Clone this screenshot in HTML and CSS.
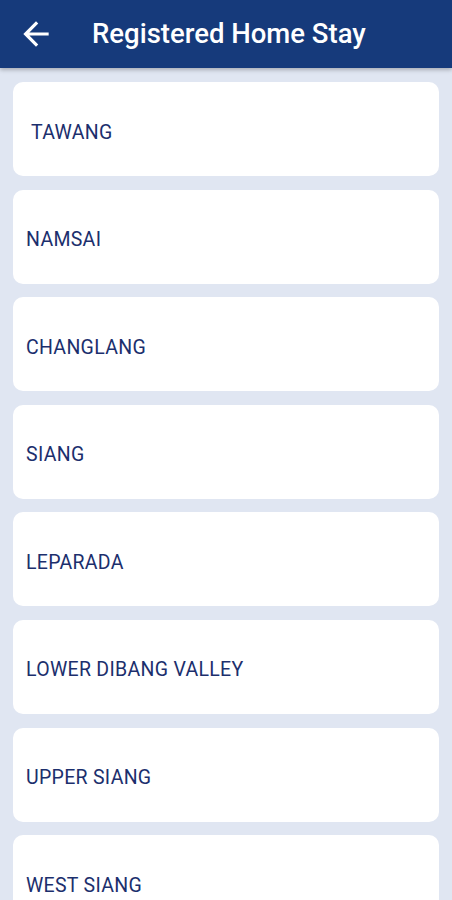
FILE: index.html
```html
<!DOCTYPE html>
<html>
<head>
    <meta charset="utf-8">
    <title>Registered Home Stay</title>
    <link rel="stylesheet" href="styles.css">
</head>
<body>
<div class="topbar">
    <svg class="back" width="38" height="38" viewBox="0 0 24 24">
        <path d="M20 11H7.83l5.59-5.59L12 4l-8 8 8 8 1.41-1.41L7.83 13H20v-2z" fill="#fff"/>
    </svg>
    <span class="title">Registered Home Stay</span>
</div>
<ul class="list">
    <li class="card"><span class="pad"></span>TAWANG</li>
    <li class="card">NAMSAI</li>
    <li class="card">CHANGLANG</li>
    <li class="card">SIANG</li>
    <li class="card">LEPARADA</li>
    <li class="card">LOWER DIBANG VALLEY</li>
    <li class="card">UPPER SIANG</li>
    <li class="card">WEST SIANG</li>
</ul>
</body>
</html>
```
FILE: styles.css
```css
* {
    margin: 0px;
    padding: 0px;
}
body {
    background: #e0e6f2;
    font-family: Roboto, "Liberation Sans", sans-serif;
    overflow: hidden;
    height: 900px;
}
.topbar {
    height: 68px;
    background: #163a7b;
    display: flex;
    align-items: center;
    padding-left: 17px;
    box-shadow: 0 2px 4px rgba(0, 0, 0, 0.25);
}
.back {
    margin-right: 37px;
}
.title {
    color: #fff;
    font-size: 27.5px;
    font-weight: 500;
    padding-bottom: 2px;
}
.list {
    list-style-type: none;
    padding: 14px 13px 0 13px;
    display: flex;
    flex-direction: column;
    gap: 13.6px;
}
.card {
    background: #fff;
    border-radius: 10px;
    height: 94px;
    box-sizing: border-box;
    padding-top: 6px;
    display: flex;
    align-items: center;
    padding-left: 13px;
    color: #1c2f6d;
    font-size: 19.5px;
    letter-spacing: 0.3px;
}
.pad {
    display: inline-block;
    width: 5px;
}
```
